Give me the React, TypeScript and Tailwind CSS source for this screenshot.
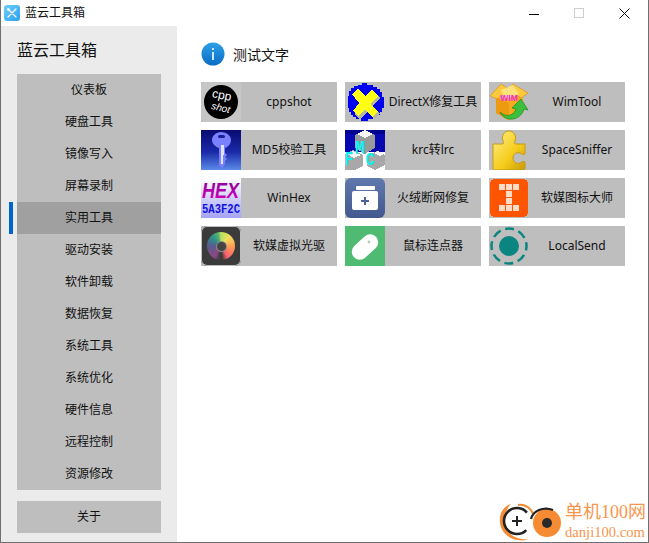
import type { ReactNode } from 'react';

const FONT = "font-['Noto_Sans','Noto_Sans_CJK_SC',sans-serif]";

const navItems = [
  '仪表板',
  '硬盘工具',
  '镜像写入',
  '屏幕录制',
  '实用工具',
  '驱动安装',
  '软件卸载',
  '数据恢复',
  '系统工具',
  '系统优化',
  '硬件信息',
  '远程控制',
  '资源修改',
];

const CppIcon = () => (
  <svg width="40" height="40" viewBox="0 0 40 40">
    <rect width="40" height="40" rx="3" fill="#c6c6c6" />
    <circle cx="20" cy="20" r="17" fill="#000" />
    <text x="20" y="17" fontSize="12" fill="#fff" textAnchor="middle" fontFamily="Liberation Sans" transform="rotate(12 20 17)">cpp</text>
    <text x="19" y="29" fontSize="10" fill="#fff" textAnchor="middle" fontFamily="Liberation Sans" fontStyle="italic" transform="rotate(14 19 29)">shot</text>
  </svg>
);

const DirectXIcon = () => (
  <svg width="40" height="40" viewBox="0 0 40 40" shapeRendering="crispEdges">
    <path d="M17 1h5v2h6v2h4v2h3v3h2v5h2v11h-2v4h-2v3h-3v2h-4v2h-5v2H16v-2h-5v-2H8v-2H6v-3H4v-4H3V14h1V9h2V6h3V4h4V3h4z" fill="#0000f0" />
    <path d="M8 12l6-5 7 7 7-6 6 6-7 8 7 8-6 5-7-7-7 8-5-6 6-8z" fill="#b8b8a0" transform="translate(1 2)" />
    <path d="M7 12l6-5 7 7 7-6 6 6-7 8 7 8-6 5-7-7-7 6-5-5 6-8z" fill="#ffff14" />
  </svg>
);

const KeyIcon = () => (
  <svg width="40" height="40" viewBox="0 0 40 40">
    <defs>
      <linearGradient id="keyBg" x1="0" y1="0" x2="0" y2="1">
        <stop offset="0" stopColor="#0a0a70" />
        <stop offset="0.55" stopColor="#1a2aa8" />
        <stop offset="1" stopColor="#5a8ae8" />
      </linearGradient>
    </defs>
    <rect width="40" height="40" fill="url(#keyBg)" />
    <path d="M20 2c6 0 10 4 10 8 0 4-3 7-6 8v5l2 2-2 2 2 2-2 2v3l-3 4-3-3V18c-3-1-7-4-7-8 0-4 4-8 9-8z" fill="#7a80ff" />
    <path d="M20 15h3v10h-1v9h-2z" fill="#e0e4ff" />
    <rect x="17" y="5" width="7" height="3" rx="1.5" fill="#1a2090" />
  </svg>
);

const KrcIcon = () => (
  <svg width="40" height="40" viewBox="0 0 40 40" shapeRendering="crispEdges">
    <rect width="40" height="22" fill="#0808b0" />
    <rect width="40" height="4" fill="#000090" />
    <rect y="22" width="40" height="18" fill="#fff" />
    <path d="M10 5l10-5 10 5v13l-10 6-10-6z" fill="#9a9a9a" />
    <path d="M12 4l8-4 8 4-8 4z" fill="#f6f6f6" />
    <path d="M0 24l8-4 10 5v11l-8 4H0z" fill="#a8a8a8" />
    <path d="M2 24l6-3 8 4-7 3z" fill="#f6f6f6" />
    <path d="M22 26l10-5 8 4v10l-10 5-8-4z" fill="#a8a8a8" />
    <path d="M29 23l4-2 6 3-4 2z" fill="#f6f6f6" />
    <text fontSize="14" fontWeight="700" fill="#10f0f0" textAnchor="middle" fontFamily="Liberation Mono" transform="translate(15 24) scale(1.2 1.4)">M</text>
    <text fontSize="14" fontWeight="700" fill="#10f0f0" textAnchor="middle" fontFamily="Liberation Mono" transform="translate(4 35) scale(1 1.4)">F</text>
    <text fontSize="14" fontWeight="700" fill="#10f0f0" textAnchor="middle" fontFamily="Liberation Mono" transform="translate(25 35) scale(1.1 1.3)">C</text>
  </svg>
);

const WimIcon = () => (
  <svg width="40" height="40" viewBox="0 0 40 40">
    <path d="M7 15l27-3v17L19 38 7 31z" fill="#f5ab1e" />
    <path d="M7 16l13 5v17L7 31z" fill="#ee9a10" />
    <path d="M1 14L12 2l9 6-13 9z" fill="#fcc83c" stroke="#d98a10" strokeWidth=".6" />
    <path d="M24 2l15 9-7 5-12-8z" fill="#fcc83c" stroke="#d98a10" strokeWidth=".6" />
    <path d="M12 8l12-5 6 9-14 5z" fill="#fde27a" />
    <text x="20" y="19" fontSize="8.5" fontWeight="700" fill="#f828e8" textAnchor="middle" fontFamily="Liberation Sans">WIM</text>
    <path d="M11 30c5 5 13 5 16-3l-4-1 9-9 7 11-4-1c-4 13-20 13-24 3z" fill="#3cc03c" stroke="#1c861c" strokeWidth=".7" />
  </svg>
);

const PuzzleIcon = () => (
  <svg width="40" height="40" viewBox="0 0 40 40">
    <defs>
      <linearGradient id="puzzleBg" x1="0" y1="0" x2="1" y2="1">
        <stop offset="0" stopColor="#fff08a" />
        <stop offset="0.6" stopColor="#f5cc1a" />
        <stop offset="1" stopColor="#c99a0a" />
      </linearGradient>
    </defs>
    <path d="M4 14h9c2 0 2-1 1-3-2-6 2-10 6-10s8 4 6 10c-1 2-1 3 1 3h9v9c0 2-2 2-3 1-4-3-9-1-9 4s5 7 9 4c1-1 3-1 3 1v5c0 2-1 2-3 2H6c-1 0-2-1-2-2z" fill="url(#puzzleBg)" stroke="#c79a12" strokeWidth="1" />
  </svg>
);

const HexIcon = () => (
  <svg width="40" height="40" viewBox="0 0 40 40">
    <defs>
      <linearGradient id="hexBg" x1="0" y1="0" x2="0" y2="1">
        <stop offset="0" stopColor="#ffffff" />
        <stop offset="1" stopColor="#a4a4f8" />
      </linearGradient>
      <linearGradient id="hexText" x1="0" y1="0" x2="0" y2="1">
        <stop offset="0" stopColor="#800090" />
        <stop offset="1" stopColor="#e000c0" />
      </linearGradient>
    </defs>
    <rect width="40" height="40" fill="url(#hexBg)" />
    <text fontSize="18" fontWeight="700" fontStyle="italic" fill="url(#hexText)" textAnchor="middle" fontFamily="Liberation Sans" transform="translate(19.5 20) scale(1 1.2)">HEX</text>
    <text fontSize="10.6" fontWeight="700" fill="#1010e0" textAnchor="middle" fontFamily="Liberation Mono" transform="translate(20 35) scale(1 1.2)">5A3F2C</text>
  </svg>
);

const DiscIcon = () => (
  <div className="relative flex h-10 w-10 items-center justify-center rounded-[6px] bg-[#3b3b3b] ring-1 ring-inset ring-[#bebebe]">
    <div className="flex h-7 w-7 items-center justify-center rounded-full bg-[conic-gradient(#b8e060,#f0e060_40deg,#ffa050_90deg,#f86070_150deg,#3b3b3b_175deg,#3b3b3b_185deg,#8a4a80_210deg,#5a5a90_270deg,#308a90_310deg,#50b070_345deg,#b8e060)]">
      <div className="h-[9px] w-[9px] rounded-full bg-[#444] ring-1 ring-[#8a8a8a]" />
    </div>
  </div>
);

const FolderIcon = () => (
  <svg width="40" height="40" viewBox="0 0 40 40">
    <defs>
      <linearGradient id="folderBg" x1="0" y1="0" x2="0" y2="1">
        <stop offset="0" stopColor="#6079ad" />
        <stop offset="1" stopColor="#42588f" />
      </linearGradient>
    </defs>
    <rect width="40" height="40" rx="6" fill="url(#folderBg)" />
    <rect x="11" y="8" width="19" height="4" rx="1" fill="#fff" />
    <rect x="7" y="13" width="26" height="19" rx="2" fill="#fff" />
    <path d="M19 19h2v3h3v2h-3v3h-2v-3h-3v-2h3z" fill="#4c6298" />
  </svg>
);

const MouseIcon = () => (
  <svg width="40" height="40" viewBox="0 0 40 40">
    <rect width="40" height="40" fill="#4fbb72" />
    <rect x="5" y="13" width="30" height="16" rx="8" fill="#fff" transform="rotate(-42 20 21)" />
    <circle cx="24" cy="16" r="1.4" fill="#b8c8bc" />
  </svg>
);

const IconMasterIcon = () => (
  <svg width="40" height="40" viewBox="0 0 40 40" shapeRendering="crispEdges">
    <rect x="1" y="1" width="38" height="38" rx="5" fill="#ff5500" />
    <g fill="#ffdcc8">
      <rect x="10" y="6" width="6" height="6" />
      <rect x="17" y="6" width="6" height="6" />
      <rect x="24" y="6" width="6" height="6" />
      <rect x="17" y="13" width="6" height="6" />
      <rect x="17" y="20" width="6" height="6" />
      <rect x="10" y="27" width="6" height="6" />
      <rect x="17" y="27" width="6" height="6" />
      <rect x="24" y="27" width="6" height="6" />
    </g>
  </svg>
);

const LocalSendIcon = () => (
  <svg width="40" height="40" viewBox="0 0 40 40">
    <circle cx="20" cy="20" r="10" fill="#0b8580" />
    <circle cx="20" cy="20" r="17.5" fill="none" stroke="#0b8580" strokeWidth="2.5" strokeDasharray="9 4.75" strokeDashoffset="4.5" />
  </svg>
);

const tools: { name: string; icon: ReactNode }[] = [
  { name: 'cppshot', icon: <CppIcon /> },
  { name: 'DirectX修复工具', icon: <DirectXIcon /> },
  { name: 'WimTool', icon: <WimIcon /> },
  { name: 'MD5校验工具', icon: <KeyIcon /> },
  { name: 'krc转lrc', icon: <KrcIcon /> },
  { name: 'SpaceSniffer', icon: <PuzzleIcon /> },
  { name: 'WinHex', icon: <HexIcon /> },
  { name: '火绒断网修复', icon: <FolderIcon /> },
  { name: '软媒图标大师', icon: <IconMasterIcon /> },
  { name: '软媒虚拟光驱', icon: <DiscIcon /> },
  { name: '鼠标连点器', icon: <MouseIcon /> },
  { name: 'LocalSend', icon: <LocalSendIcon /> },
];

const AppLogo = () => (
  <svg width="16" height="16" viewBox="0 0 16 16">
    <defs>
      <linearGradient id="appLogo" x1="0" y1="0" x2="1" y2="1">
        <stop offset="0" stopColor="#6fd0f8" />
        <stop offset="1" stopColor="#2a9ff0" />
      </linearGradient>
    </defs>
    <rect width="16" height="16" rx="3" fill="url(#appLogo)" />
    <path d="M4 4l8 8M12 4l-8 8" stroke="#fff" strokeWidth="1.2" strokeLinecap="round" />
    <circle cx="4.5" cy="4.5" r="1.3" fill="#fff" />
  </svg>
);

const InfoIcon = () => (
  <svg width="24" height="24" viewBox="0 0 24 24">
    <defs>
      <linearGradient id="infoBg" x1="0" y1="0" x2="0" y2="1">
        <stop offset="0" stopColor="#2da0e8" />
        <stop offset="1" stopColor="#0a6cc4" />
      </linearGradient>
    </defs>
    <circle cx="12" cy="12" r="11.5" fill="url(#infoBg)" />
    <rect x="11" y="6" width="2" height="2" fill="#cfe6f8" />
    <rect x="11" y="10" width="2" height="8" fill="#cfe6f8" />
  </svg>
);

// site watermark stamped over the bottom right corner
const Watermark = () => (
  <div className="absolute bottom-0 right-0 flex items-end">
    <svg width="64" height="43" viewBox="0 0 64 43">
      <path d="M12 5C3 8 0 16 1 24c1 9 9 16 18 17 5 1 8 0 11-1-9 1-20-2-23-13C5 18 7 10 12 5z" fill="#f78b34" />
      <path d="M19 6c7-1 13 3 15 9" fill="none" stroke="#f78b34" strokeWidth="2" />
      <circle cx="18" cy="22" r="13" fill="#fff" stroke="#222" strokeWidth="2.6" strokeDasharray="62 20" strokeDashoffset="-10" />
      <path d="M17 17h2v4h4v2h-4v4h-2v-4h-4v-2h4z" fill="#222" />
      <circle cx="48" cy="24" r="14" fill="#f78b34" />
      <path d="M32 20c2-8 12-13 22-9" fill="none" stroke="#222" strokeWidth="2.2" />
      <circle cx="48" cy="24" r="5" fill="#2a2a2a" />
    </svg>
    <div className="mb-[2px] ml-[2px] mr-[2px] flex flex-col items-start font-['Liberation_Serif','Noto_Sans_CJK_SC',serif] text-[#f9954c]">
      <span className="text-[18px] leading-[24px]">单机100网</span>
      <span className="text-[14.6px] leading-[16px]">danji100.com</span>
    </div>
  </div>
);

export default function App() {
  return (
    <div className={`relative flex h-[543px] w-[649px] flex-col overflow-hidden border-x border-b border-[#6f6f6f] bg-white text-[#111] ${FONT}`}>
      <header className="flex h-[26px] shrink-0 items-center">
        <div className="ml-[3px] mr-[5px]">
          <AppLogo />
        </div>
        <span className="text-[12px]">蓝云工具箱</span>
        <div className="ml-auto flex items-center">
          <div className="mr-[35px] mt-[2px] h-px w-[10px] bg-black" />
          <div className="mr-[35px] h-[10px] w-[10px] border border-[#cfcfcf]" />
          <svg className="mr-[18px]" width="11" height="11" viewBox="0 0 11 11">
            <path d="M.5.5l10 10M10.5.5l-10 10" stroke="#111" />
          </svg>
        </div>
      </header>

      <div className="flex min-h-0 flex-1">
        <aside className="flex w-[176px] shrink-0 flex-col bg-[#ebebeb] pl-4">
          <h1 className="flex h-12 items-center text-[16px] font-normal">蓝云工具箱</h1>
          <nav className="flex w-36 flex-col">
            {navItems.map((item) => (
              <div key={item} className={`relative flex h-8 items-center justify-center text-[12px] ${item === '实用工具' ? 'bg-[#a0a0a0]' : 'bg-[#bebebe]'}`}>
                {item === '实用工具' && <span className="absolute left-[-8px] top-0 h-8 w-1 bg-[#0066cc]" />}
                {item}
              </div>
            ))}
          </nav>
          <button className="mt-[11px] flex h-8 w-36 items-center justify-center bg-[#bebebe] text-[12px]">关于</button>
        </aside>

        <main className="flex-1 pl-6 pt-4">
          <div className="flex h-6 items-center gap-2">
            <InfoIcon />
            <span className="text-[14px]">测试文字</span>
          </div>
          <div className="mt-4 grid grid-cols-[136px_136px_136px] gap-2">
            {tools.map((tool) => (
              <div key={tool.name} className="flex h-10 items-center bg-[#bebebe]">
                <div className="h-10 w-10 shrink-0 overflow-hidden">{tool.icon}</div>
                <span className="flex-1 whitespace-nowrap text-center text-[12px]">{tool.name}</span>
              </div>
            ))}
          </div>
        </main>
      </div>

      <Watermark />
    </div>
  );
}
